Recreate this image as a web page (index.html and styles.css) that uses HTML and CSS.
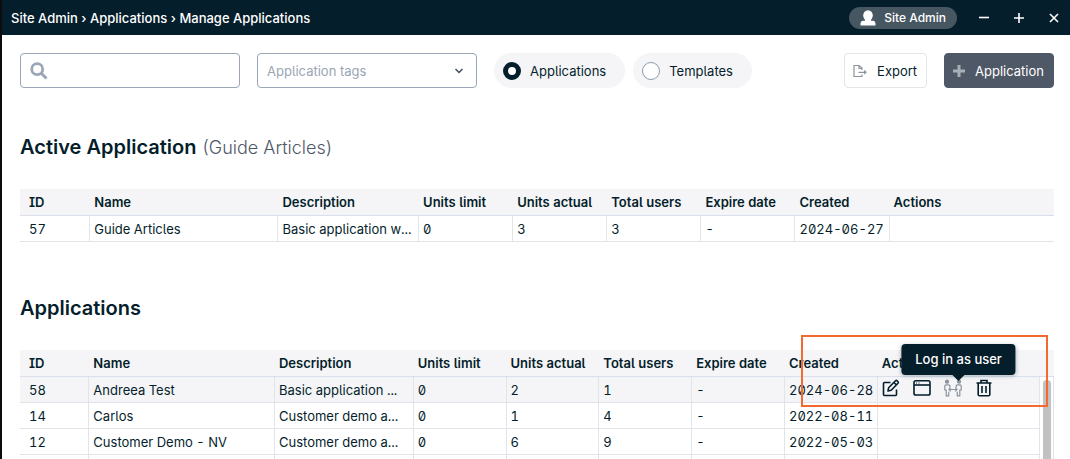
FILE: index.html
```html
<!DOCTYPE html>
<html lang="en">
<head>
    <meta charset="utf-8">
    <title>Manage Applications</title>
    <link rel="stylesheet" href="styles.css">
</head>
<body>
    <header class="topbar">
        <nav class="breadcrumb">
            <a href="#">Site Admin</a> › <a href="#">Applications</a> › <a href="#">Manage Applications</a>
        </nav>
        <button class="user" type="button">
            <svg width="16" height="16" viewBox="0 0 16 16" fill="#fff"><ellipse cx="8" cy="5.500" rx="4.800" ry="5.200"/><path d="M5 9.500h6v1.300h2.500q2 .6 2 2.700V15.500H.5v-2q0-2.100 2-2.700H5z"/></svg>
            Site Admin
        </button>
        <div class="window-buttons">
            <button type="button" aria-label="Minimize"><svg width="12" height="12" viewBox="0 0 12 12"><path d="M1 5.500h10"/></svg></button>
            <button type="button" aria-label="Maximize"><svg width="12" height="12" viewBox="0 0 12 12"><path d="M1 6h10M6 1v10"/></svg></button>
            <button type="button" aria-label="Close"><svg width="12" height="12" viewBox="0 0 12 12"><path d="M2 2l8 8M10 2l-8 8"/></svg></button>
        </div>
    </header>

    <main>
        <form class="toolbar">
            <div class="field">
                <svg class="search-icon" width="18" height="18" viewBox="0 0 18 18" fill="none" stroke="#9aa5b5"><circle cx="7.200" cy="7.200" r="5.500" stroke-width="2.800"/><path d="M11.500 11.500l5 5" stroke-width="3"/></svg>
                <input type="text" aria-label="Search">
            </div>
            <div class="field">
                <select aria-label="Application tags">
                    <option>Application tags</option>
                </select>
                <svg class="chevron" width="10" height="8" viewBox="0 0 10 8" fill="none" stroke="#3f4d5e" stroke-width="1.500"><path d="M1.500 2l3.500 3.500L8.500 2"/></svg>
            </div>
            <div class="choices">
                <label class="choice"><input type="radio" name="kind" checked>Applications</label>
                <label class="choice"><input type="radio" name="kind">Templates</label>
            </div>
            <div class="toolbar-actions">
                <button class="btn" type="button">
                    <svg width="14" height="14" viewBox="0 0 14 14" fill="none" stroke="#8a949e" stroke-width="1.200"><path d="M9 6V4L6 1.500H1V12.500h8v-2M6 1.500v3h3M5.500 8.300h7.500M11.200 6.500L13 8.300l-1.800 1.800"/></svg>
                    Export
                </button>
                <button class="btn btn-dark" type="button">
                    <svg width="12" height="12" viewBox="0 0 12 12" stroke="#a9afb7" stroke-width="3"><path d="M0 6h12M6 0v12"/></svg>
                    Application
                </button>
            </div>
        </form>

        <h2>Active Application <span>(Guide Articles)</span></h2>
        <table>
            <colgroup>
                <col class="col-id"><col class="col-name"><col class="col-desc">
                <col><col><col><col><col>
                <col class="col-actions">
            </colgroup>
            <thead>
                <tr><th>ID</th><th>Name</th><th>Description</th><th>Units limit</th><th>Units actual</th><th>Total users</th><th>Expire date</th><th>Created</th><th>Actions</th></tr>
            </thead>
            <tbody>
                <tr><td>57</td><td>Guide Articles</td><td>Basic application w...</td><td>0</td><td>3</td><td>3</td><td>-</td><td>2024-06-27</td><td></td></tr>
            </tbody>
        </table>

        <h2 class="second">Applications</h2>
        <div class="list">
            <table>
                <colgroup>
                    <col class="col-id"><col class="col-name"><col class="col-desc">
                    <col><col><col><col><col>
                    <col class="col-actions">
                </colgroup>
                <thead>
                    <tr><th>ID</th><th>Name</th><th>Description</th><th>Units limit</th><th>Units actual</th><th>Total users</th><th>Expire date</th><th>Created</th><th>Actions</th></tr>
                </thead>
                <tbody>
                    <tr class="selected">
                        <td>58</td><td>Andreea Test</td><td>Basic application ...</td><td>0</td><td>2</td><td>1</td><td>-</td><td>2024-06-28</td>
                        <td class="actions">
                            <div class="icons">
                                <button type="button" aria-label="Edit">
                                    <svg width="18" height="18" viewBox="0 0 18 18" fill="none" stroke="#041e2b" stroke-width="1.600" stroke-linejoin="round"><path d="M8.500 3.500H2.500q-1 0-1 1v11q0 1 1 1h11q1 0 1-1v-5M6 12l.6-3.200L13.500 1.800q.8-.7 1.600 0l.9.9q.8.8 0 1.600L9.200 11.300zM12 3.500l2.500 2.500"/></svg>
                                </button>
                                <button type="button" aria-label="Open">
                                    <svg width="18" height="18" viewBox="0 0 18 18" fill="none" stroke="#041e2b" stroke-width="1.600"><rect x="1" y="1.800" width="16" height="14.200" rx="1.800"/><path d="M1 6h16"/><path d="M3 4h1M5.500 4h1" stroke-width="1"/></svg>
                                </button>
                                <button type="button" aria-label="Log in as user">
                                    <svg width="18" height="18" viewBox="0 0 18 18" fill="none" stroke="#8b949d" stroke-width="1.200"><circle cx="3" cy="2.700" r="1.500" fill="#8b949d"/><circle cx="15" cy="2.700" r="1.500" fill="#8b949d"/><path d="M5.800 8.500V7q0-1.200-1.300-1.200H2Q.8 5.800.8 7v4h1.400v5.800h2.500v-4M12.200 8.500V7q0-1.200 1.300-1.200H16q1.200 0 1.200 1.200v4h-1.400v5.800h-2.500v-4M5 10.500h8M6.700 8.700L5 10.500l1.700 1.800M11.300 8.700l1.700 1.800-1.700 1.800"/></svg>
                                    <span class="tooltip">Log in as user</span>
                                </button>
                                <button type="button" aria-label="Delete">
                                    <svg width="18" height="18" viewBox="0 0 18 18" fill="none" stroke="#041e2b" stroke-width="1.600"><path d="M1.500 4h15M6 4V1.500h6V4M3.200 4v11.500q0 1.300 1.300 1.300h9q1.300 0 1.300-1.300V4M7 7v7M11 7v7"/></svg>
                                </button>
                            </div>
                        </td>
                    </tr>
                    <tr><td>14</td><td>Carlos</td><td>Customer demo a...</td><td>0</td><td>1</td><td>4</td><td>-</td><td>2022-08-11</td><td></td></tr>
                    <tr><td>12</td><td>Customer Demo - NV</td><td>Customer demo a...</td><td>0</td><td>6</td><td>9</td><td>-</td><td>2022-05-03</td><td></td></tr>
                    <tr><td></td><td></td><td></td><td></td><td></td><td></td><td></td><td></td><td></td></tr>
                </tbody>
            </table>
            <div class="scroll">
                <div class="scroll-head"></div>
                <div class="scroll-track"><div class="scroll-thumb"></div></div>
            </div>
            <div class="highlight"></div>
        </div>
    </main>
</body>
</html>
```
FILE: styles.css
```css
* {
    box-sizing: border-box;
}

body {
    margin: 0;
    height: 100vh;
    overflow: hidden;
    border-left: 2px solid #0c0c0c;
    background: #fff;
    color: #041e2b;
    font-family: Inter, "Liberation Sans", sans-serif;
    font-size: 13px;
    line-height: 16px;
}

button, input, select {
    font: inherit;
    color: inherit;
}

button {
    border: none;
    background: none;
    padding: 0;
    cursor: pointer;
}

svg {
    display: block;
}

/* top bar */
.topbar {
    display: flex;
    align-items: center;
    height: 35px;
    padding: 0 10px 0 9px;
    background: #041e2b;
    color: #fff;
    font-weight: 500;
}

.breadcrumb {
    flex: 1;
}

.breadcrumb a {
    color: inherit;
    text-decoration: none;
}

.user {
    display: flex;
    align-items: center;
    gap: 8px;
    height: 22px;
    padding: 0 11px;
    border-radius: 11px;
    background: #465761;
    font-size: 12px;
}

.window-buttons {
    display: flex;
    gap: 23px;
    margin-left: 21px;
}

.window-buttons svg {
    fill: none;
    stroke: #fff;
    stroke-width: 1.6;
}

main {
    padding: 18px 16px 0 18px;
}

/* search, filter and buttons */
.toolbar {
    display: flex;
    gap: 17px;
}

.field {
    position: relative;
    width: 220px;
}

.field input, .field select {
    display: block;
    width: 100%;
    height: 35px;
    border: 1px solid #9aa5b5;
    border-radius: 4px;
    background: #fff;
}

.field input {
    padding: 0 10px 0 34px;
}

.field select {
    appearance: none;
    padding: 0 9px;
    color: #9aa5b5;
    font-feature-settings: "ss02";
}

.search-icon {
    position: absolute;
    left: 10px;
    top: 9px;
}

.chevron {
    position: absolute;
    right: 13px;
    top: 14px;
}

.choices {
    display: flex;
    gap: 8px;
    font-feature-settings: "ss02";
}

.choice {
    display: flex;
    align-items: center;
    gap: 9px;
    height: 35px;
    padding: 0 19px 0 9px;
    border-radius: 18px;
    background: #f5f5f7;
}

.choice input {
    appearance: none;
    width: 18px;
    height: 18px;
    margin: 0;
    border: 1px solid #8d9aab;
    border-radius: 50%;
    background: #fff;
}

.choice input:checked {
    border: 5px solid #041e2b;
}

.toolbar-actions {
    display: flex;
    gap: 17px;
    margin-left: auto;
}

.btn {
    display: flex;
    align-items: center;
    gap: 10px;
    height: 35px;
    padding: 0 9px 0 8px;
    border: 1px solid #e3e6e9;
    border-radius: 4px;
}

.btn-dark {
    border-color: #4f5866;
    background: #4f5866;
    color: #fff;
}

h2 {
    margin: 47px 0 30px;
    font-size: 20px;
    line-height: 24px;
    font-weight: 600;
}

h2.second {
    margin-top: 54px;
}

h2 span {
    margin-left: 1px;
    color: #4f5866;
    font-size: 18px;
    font-weight: 300;
}

/* tables */
table {
    width: 100%;
    table-layout: fixed;
    border-collapse: separate;
    border-spacing: 0;
    font-feature-settings: "ss02", "tnum";
}

h2 + table {
    margin-top: -1px;
}

.col-id {
    width: 6.8%;
}

.col-name {
    width: 18.2%;
}

.col-desc {
    width: 13.6%;
}

.col-actions {
    width: 15.9%;
}

th, td {
    padding: 0 2px 0 4px;
    border-bottom: 1px solid #e1e4e8;
    text-align: left;
    white-space: nowrap;
}

th {
    height: 27px;
    padding-bottom: 1px;
    background: #f5f5f7;
    border-bottom-color: #d9e0ec;
    font-weight: 600;
}

td {
    height: 26px;
    border-right: 1px solid #e1e4e8;
    overflow: hidden;
    text-overflow: ellipsis;
}

th:first-child, td:first-child {
    padding-left: 9px;
}

td:last-child {
    border-right: none;
}

.list {
    position: relative;
    display: flex;
}

.list td:last-child {
    border-right: 1px solid #e1e4e8;
}

.selected td {
    background: #f5f5f7;
}

td.actions {
    overflow: visible;
    padding-top: 2px;
    vertical-align: top;
    font-feature-settings: normal;
}

.icons {
    display: flex;
    gap: 13px;
}

.icons button {
    position: relative;
}

.tooltip {
    position: absolute;
    z-index: 2;
    left: 50%;
    bottom: 22px;
    transform: translateX(-45%);
    padding: 7px 14px 8px;
    border-radius: 4px;
    background: #041e2b;
    color: #fff;
    font-weight: 500;
    box-shadow: 0 1px 4px rgba(4, 30, 43, 0.3);
}

.tooltip::after {
    content: "";
    position: absolute;
    left: 50%;
    top: 100%;
    margin-left: -6px;
    border: 6px solid transparent;
    border-top-color: #041e2b;
    border-bottom: none;
}

.scroll {
    display: flex;
    flex-direction: column;
    flex: 0 0 14px;
}

.scroll-head {
    height: 27px;
    border-bottom: 1px solid #d9e0ec;
    background: #f5f5f7;
}

.scroll-track {
    flex: 1;
    padding: 3px 2px 0 3px;
    border-right: 1px solid #e1e4e8;
}

.scroll-thumb {
    height: 100%;
    border-radius: 4px 4px 0 0;
    background: #c1c1c1;
}

.highlight {
    position: absolute;
    z-index: 1;
    top: -15px;
    right: 6px;
    width: 247px;
    height: 72px;
    border: 2px solid #f26a30;
    pointer-events: none;
}
```
